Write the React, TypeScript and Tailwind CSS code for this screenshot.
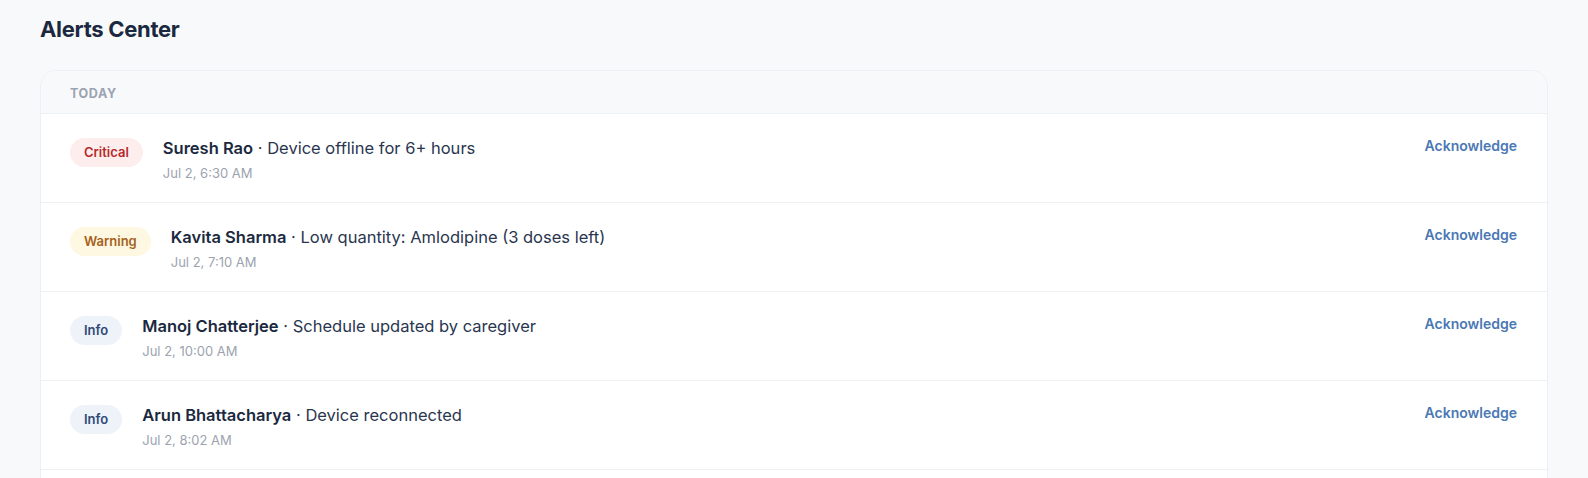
const alerts = [
  {
    level: "Critical",
    badge: "bg-[#fdeded] text-[#b42a2a]",
    name: "Suresh Rao",
    message: "Device offline for 6+ hours",
    time: "Jul 2, 6:30 AM",
  },
  {
    level: "Warning",
    badge: "bg-[#fef7e1] text-[#a5621c]",
    name: "Kavita Sharma",
    message: "Low quantity: Amlodipine (3 doses left)",
    time: "Jul 2, 7:10 AM",
  },
  {
    level: "Info",
    badge: "bg-[#eef2f9] text-[#2e4a78]",
    name: "Manoj Chatterjee",
    message: "Schedule updated by caregiver",
    time: "Jul 2, 10:00 AM",
  },
  {
    level: "Info",
    badge: "bg-[#eef2f9] text-[#2e4a78]",
    name: "Arun Bhattacharya",
    message: "Device reconnected",
    time: "Jul 2, 8:02 AM",
  },
];

export default function App() {
  return (
    <div
      className="min-h-screen bg-[#f8f9fb] px-10 pt-[13px] text-[#1e2a40]"
      style={{ fontFamily: 'Inter, "Noto Sans", sans-serif' }}
    >
      <h1 className="mb-[25px] text-[22px] font-bold leading-8 tracking-[-0.3px] text-[#1b2940]">Alerts Center</h1>

      <div className="overflow-hidden rounded-2xl border border-[#eceff3] bg-white">
        <div className="border-b border-[#eceff3] bg-[#f8f9fb] px-[29px] pt-[15px] pb-[11px] text-[12.5px] leading-4 font-bold tracking-wider text-[#9aa3b2] uppercase">
          Today
        </div>

        {alerts.map((a, i) => (
          <div key={i} className="flex items-start border-b border-[#eef0f3] px-[29px] pt-[22px] pb-5">
            <span
              className={`mt-0.5 shrink-0 rounded-full px-3.5 py-1.5 text-[13px] leading-[17px] font-semibold ${a.badge}`}
            >
              {a.level}
            </span>
            <div className="ml-5 flex-1">
              <div className="text-[16.5px] leading-6">
                <span className="font-semibold text-[#1b2940]">{a.name}</span>
                <span className="text-[#2a3650]"> · {a.message}</span>
              </div>
              <div className="mt-1 text-[13px] leading-[18px] text-[#9ca3af]">{a.time}</div>
            </div>
            <button
              type="button"
              className="mr-px shrink-0 text-sm leading-5 font-semibold text-[#4a78b4]"
            >
              Acknowledge
            </button>
          </div>
        ))}
        <div className="h-10" />
      </div>
    </div>
  );
}
